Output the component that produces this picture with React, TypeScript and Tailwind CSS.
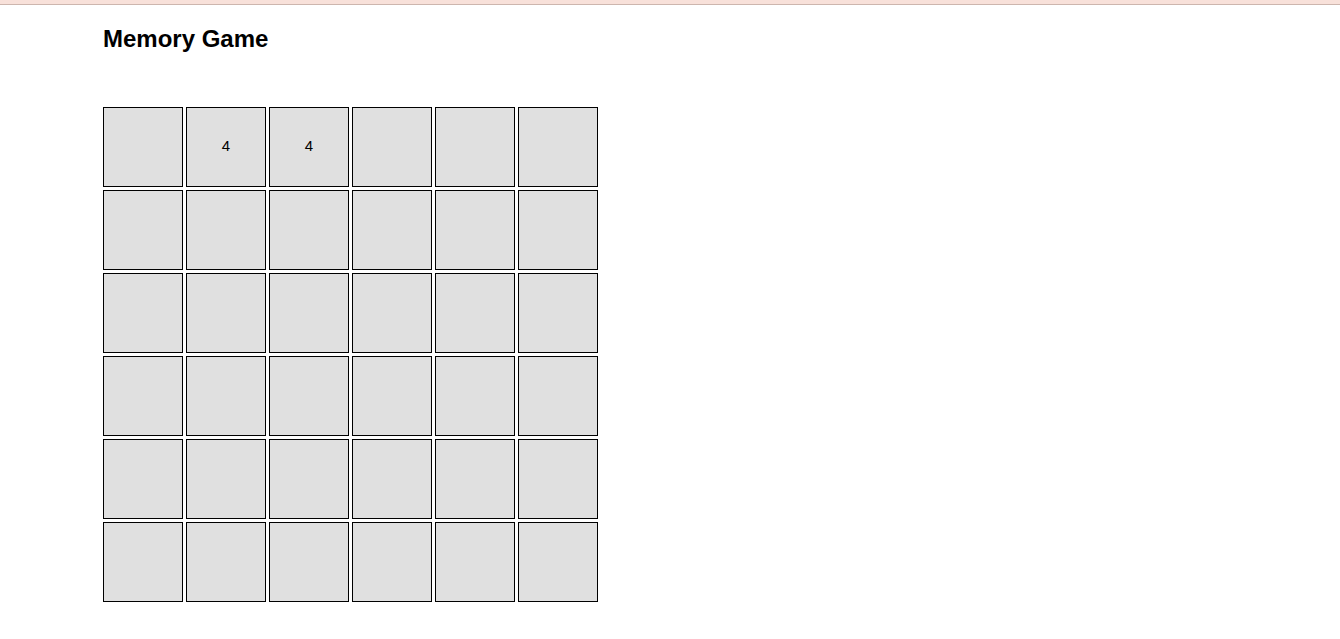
import React from 'react';

const cards: (string | null)[] = Array.from({ length: 36 }, (_, i) => (i === 1 || i === 2 ? '4' : null));

const App = () => {
  return (
    <div className="min-h-screen bg-white font-['Liberation_Sans',Arial,sans-serif] text-black">
      <div className="h-[5px] bg-[#f8e1da] border-b border-[#cdb6ae]" />
      <div className="pl-[103px] pt-[20px]">
        <h1 className="text-[24px] font-bold leading-[28px]">Memory Game</h1>
        <div className="mt-[54px] grid w-fit grid-cols-6 gap-[3px]">
          {cards.map((value, i) => (
            <div
              key={i}
              className="flex h-[80px] w-[80px] items-center justify-center border border-black bg-[#e0e0e0] pb-[2px] text-[15px]"
            >
              {value}
            </div>
          ))}
        </div>
      </div>
    </div>
  );
};

export default App;
